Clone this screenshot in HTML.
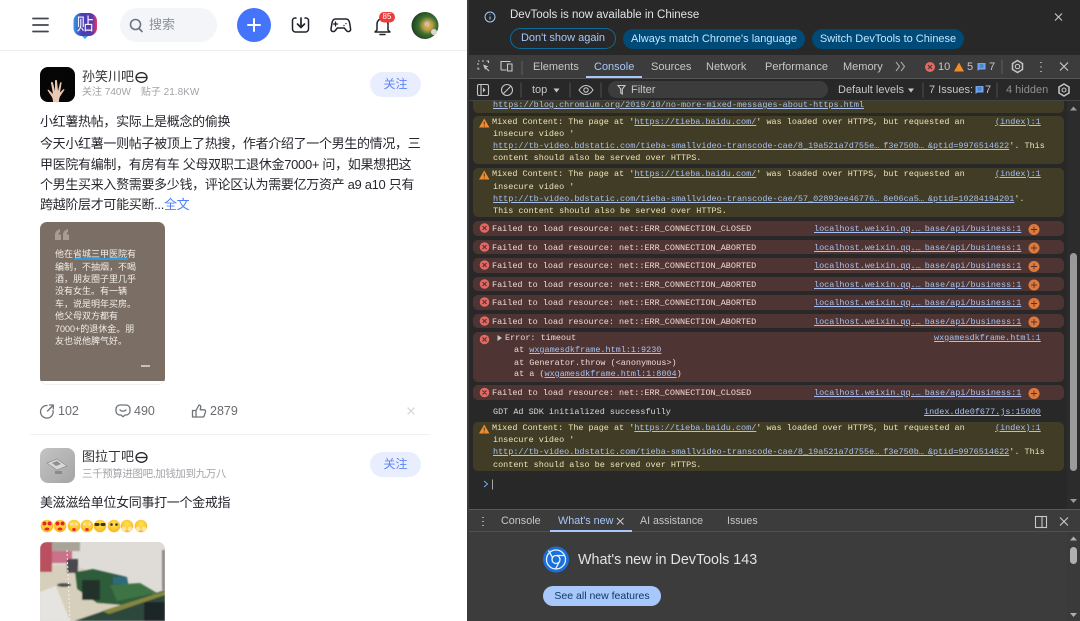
<!DOCTYPE html>
<html lang="zh"><head><meta charset="utf-8"><title>Tieba DevTools</title>
<style>
html,body{margin:0;padding:0;width:1080px;height:621px;overflow:hidden;background:#fff}
body{position:relative;font-family:"Liberation Sans","Noto Sans CJK SC",sans-serif}
.a{position:absolute;white-space:nowrap}
svg{position:absolute;overflow:visible}
#L{position:absolute;left:0;top:0;width:468px;height:621px;background:#fff;overflow:hidden;color:#26262e;filter:blur(.25px)}
#R{position:absolute;left:468px;top:0;width:612px;height:621px;background:#282828;overflow:hidden;filter:blur(.25px)}
#R>*{margin-left:-468px}
.name{font-size:13px;line-height:16px;color:#333;left:82px}
.sub{font-size:10px;line-height:14px;color:#a3a3a8;left:82px}
.fb{left:370px;width:51px;height:25px;border-radius:13px;background:#e9eefe;color:#5f83f6;font-size:12px;line-height:25px;text-align:center}
.t{left:40px;font-size:13px;line-height:18px;letter-spacing:-.32px;color:#26262e}
.act{font-size:12.5px;line-height:16px;color:#6b6b70}
.im{font-size:9px;line-height:12px;color:#f2eeea;left:55px}
.ui{font-size:11px;line-height:14px;color:#c7c7c7}
.blk{position:absolute;left:473px;width:591px;border-radius:5px}
.w{background:#413c26}.r{background:#4e3534}
.c{position:absolute;white-space:nowrap;font-family:"Liberation Mono",monospace;font-size:8.47px;line-height:12px;color:#ede2b8}
.c.e{color:#f2d8d4}.c.n{color:#d8d8d8}
.c a{color:#a8c0ee;text-decoration:underline}
.c i{font-style:normal;letter-spacing:4px}
</style></head><body>
<div id="L">
<!-- nav -->
<div class="a" style="left:120px;top:8px;width:97px;height:34px;border-radius:17px;background:#f3f5f9"></div>
<svg style="left:0;top:0" width="468" height="50">
<path d="M33 18.500h15M33 25h15M33 31.500h15" stroke="#43464e" stroke-width="1.800" stroke-linecap="round"/>
<defs><linearGradient id="lg" x1="0" y1="0" x2="1" y2="0"><stop offset="0" stop-color="#2f9be8"/><stop offset=".35" stop-color="#4a3fb5"/><stop offset=".8" stop-color="#5b3aa8"/><stop offset="1" stop-color="#ea3568"/></linearGradient></defs>
<rect x="73.500" y="13" width="23.500" height="23" rx="8" fill="url(#lg)"/>
<path d="M82 36h6l-3 3z" fill="#36a3ee"/>
<circle cx="135.500" cy="24.500" r="5" fill="none" stroke="#6d7480" stroke-width="1.600"/><path d="M139 28.500l3 3" stroke="#6d7480" stroke-width="1.600" stroke-linecap="round"/>
<circle cx="254" cy="25" r="17" fill="#4474fa"/><path d="M248 25h12M254 19v12" stroke="#fff" stroke-width="2" stroke-linecap="round"/>
<path d="M296 18h-1a2.500 2.500 0 0 0-2.500 2.500v8.500a3 3 0 0 0 3 3h10a3 3 0 0 0 3-3v-8.500a2.500 2.500 0 0 0-2.500-2.500h-1" fill="none" stroke="#20232a" stroke-width="1.500" stroke-linecap="round"/>
<path d="M301 18v9M297.500 24l3.500 3.500 3.500-3.500" fill="none" stroke="#20232a" stroke-width="1.700" stroke-linecap="round" stroke-linejoin="round"/>
<path d="M337 19h10c2.500 0 3.500 2 3.800 5l.8 5c.3 2.500-2.700 3.500-4.300 1.500l-2-2.500h-7l-2 2.500c-1.600 2-4.600 1-4.300-1.500l.8-5c.3-3 1.300-5 3.800-5z" transform="translate(-1)" fill="none" stroke="#20232a" stroke-width="1.500" stroke-linejoin="round"/>
<path d="M335.500 22v4M333.500 24h4M346 23.500v.1M344 25.500v.1" stroke="#20232a" stroke-width="1.300" stroke-linecap="round"/>
<path d="M377 30v-6a5.500 5.500 0 0 1 11 0v6l2 2h-15z" fill="none" stroke="#20232a" stroke-width="1.500" stroke-linejoin="round"/>
<path d="M380 34.500h5" stroke="#20232a" stroke-width="1.500" stroke-linecap="round"/>
<rect x="379" y="12" width="16" height="10.500" rx="5.200" fill="#ee3a3a"/>
<defs><radialGradient id="av" cx=".6" cy=".5" r=".6"><stop offset="0" stop-color="#e8bb55"/><stop offset=".3" stop-color="#b99a45"/><stop offset=".55" stop-color="#3f7030"/><stop offset="1" stop-color="#1c3d1e"/></radialGradient></defs>
<circle cx="425" cy="25.500" r="13.500" fill="url(#av)"/><circle cx="427" cy="24" r="2.500" fill="#c9c2a8"/><circle cx="434" cy="32" r="3" fill="#d8d8d0"/>
</svg>
<div class="a" style="left:76px;top:15px;width:18px;text-align:center;font-size:17px;line-height:19px;color:#f4f0ff">贴</div>
<div class="a" style="left:379px;top:12px;width:16px;text-align:center;font-size:8px;line-height:10px;color:#fff">85</div>
<div class="a" style="left:149px;top:17px;font-size:13px;line-height:16px;color:#8d929c">搜索</div>
<div class="a" style="left:0;top:50px;width:468px;height:1px;background:#eceef0"></div>

<!-- post 1 -->
<div class="a" style="left:40px;top:67px;width:35px;height:35px;border-radius:8px;background:#050505"></div>
<svg style="left:40px;top:67px" width="35" height="35">
<path d="M13 35c0-5-2-6-5-11-1-1 0-2 1-1l4 4-2-11c0-1.500 1.500-1.500 2 0l2 8 0-10c0-1.500 2-1.500 2 0l1 10 2-8c.5-1.500 2-1 1.500.5l-1.500 9 3-3c1-1 2 0 1 1l-4 6c-1 2-1 4-1 6z" fill="#e9c9b4"/>
</svg>
<div class="a name" style="top:69px">孙笑川吧</div>
<svg style="left:135px;top:71px" width="14" height="14"><ellipse cx="6.500" cy="6.500" rx="5.500" ry="4.800" fill="none" stroke="#26262e" stroke-width="1.300"/><path d="M1 6.500h11" stroke="#26262e" stroke-width="1.300"/></svg>
<div class="a sub" style="top:86px">关注 740W<span style="display:inline-block;width:10px"></span>贴子 21.8KW</div>
<div class="a fb" style="top:72px">关注</div>
<div class="a t" style="top:113px">小红薯热帖，实际上是概念的偷换</div>
<div class="a t" style="top:135px">今天小红薯一则帖子被顶上了热搜，作者介绍了一个男生的情况，三</div>
<div class="a t" style="top:156px">甲医院有编制，有房有车 父母双职工退休金7000+ 问，如果想把这</div>
<div class="a t" style="top:176px">个男生买来入赘需要多少钱，评论区认为需要亿万资产 a9 a10 只有</div>
<div class="a t" style="top:196px">跨越阶层才可能买断...<span style="color:#4f80f7">全文</span></div>
<div class="a" style="left:40px;top:222px;width:125px;height:163px;border-radius:7px;background:#fff;box-shadow:0 0 0 1px #f0f0f0 inset;overflow:hidden"><div style="height:159px;background:#7b6e64"></div></div>
<svg style="left:55px;top:229px" width="14" height="11" fill="#a89d94"><path d="M0 11V6c0-3 2-5 5-6v3c-1 .5-1.500 1.500-1.500 2.500H6V11zM8 11V6c0-3 2-5 5-6v3c-1 .5-1.500 1.500-1.500 2.500H14V11z"/></svg>
<div class="a" style="left:74px;top:258px;width:54px;height:2px;background:#2e9bd6"></div>
<div class="a im" style="top:248px">他在省城三甲医院有</div>
<div class="a im" style="top:261px">编制，不抽烟，不喝</div>
<div class="a im" style="top:273px">酒，朋友圈子里几乎</div>
<div class="a im" style="top:285px">没有女生。有一辆</div>
<div class="a im" style="top:298px">车，说是明年买房。</div>
<div class="a im" style="top:310px">他父母双方都有</div>
<div class="a im" style="top:323px">7000+的退休金。朋</div>
<div class="a im" style="top:335px">友也说他脾气好。</div>
<div class="a" style="left:141px;top:365px;width:9px;height:1.500px;background:#c9c2bb"></div>
<svg style="left:0;top:400px" width="468" height="24" fill="none" stroke="#6f7378" stroke-width="1.300" stroke-linecap="round" stroke-linejoin="round">
<path d="M47 5.500a6.300 6.300 0 1 0 6 5M47.500 11l5.500-5.500M49.500 5h3.800v3.800"/>
<path d="M120 5h6a4 4 0 0 1 4 4v2a4 4 0 0 1-4 4h-1l-2 1.700-2-1.700h-1a4 4 0 0 1-4-4V9a4 4 0 0 1 4-4zM120 10c1.500 1.500 4.500 1.500 6 0"/>
<path d="M196 10.500v6.500h-3.500v-6.500zM196 10.500l3-5.500c1.200 0 2 1 1.700 2.300l-.5 2.500h4c1 0 1.600 1 1.300 2l-1.300 4c-.2.700-.8 1.200-1.500 1.200H196"/>
<path d="M408 8l6 6M414 8l-6 6" stroke="#d8d8dc"/>
</svg>
<div class="a act" style="left:58px;top:403px">102</div>
<div class="a act" style="left:134px;top:403px">490</div>
<div class="a act" style="left:210px;top:403px">2879</div>
<div class="a" style="left:30px;top:434px;width:400px;height:1px;background:#eef0f2"></div>

<!-- post 2 -->
<div class="a" style="left:40px;top:448px;width:35px;height:35px;border-radius:8px;background:linear-gradient(135deg,#c4c4c4,#a4a4a4)"></div>
<svg style="left:40px;top:448px" width="35" height="35"><path d="M7 15l10-4 10 7-10 4z" fill="#d8d8d8" stroke="#8d8d8d" stroke-width=".7"/><path d="M12 15l5-2 4 3-5 2z" fill="#8f8f8f"/><rect x="15" y="23" width="7" height="3" fill="#8a8a8a"/></svg>
<div class="a name" style="top:449px">图拉丁吧</div>
<svg style="left:135px;top:451px" width="14" height="14"><ellipse cx="6.500" cy="6.500" rx="5.500" ry="4.800" fill="none" stroke="#26262e" stroke-width="1.300"/><path d="M1 6.500h11" stroke="#26262e" stroke-width="1.300"/></svg>
<div class="a sub" style="top:467px;font-size:10.500px;letter-spacing:-.4px">三千预算进图吧,加钱加到九万八</div>
<div class="a fb" style="top:452px">关注</div>
<div class="a t" style="top:494px">美滋滋给单位女同事打一个金戒指</div>
<svg style="left:40px;top:518px" width="110" height="16">
<defs><radialGradient id="ey" cx=".5" cy=".35" r=".7"><stop offset="0" stop-color="#ffe14f"/><stop offset="1" stop-color="#f8b420"/></radialGradient></defs>
<g fill="url(#ey)"><circle cx="7" cy="8" r="6.300"/><circle cx="20" cy="8" r="6.300"/><circle cx="34" cy="8" r="6.300"/><circle cx="47" cy="8" r="6.300"/><circle cx="60" cy="8" r="6.300"/><circle cx="74" cy="8" r="6.300"/><circle cx="87" cy="8" r="6.300"/><circle cx="101" cy="8" r="6.300"/></g>
<g fill="#e8232a"><circle cx="4.500" cy="5.500" r="2"/><circle cx="9.500" cy="5.500" r="2"/><circle cx="17.500" cy="5.500" r="2"/><circle cx="22.500" cy="5.500" r="2"/><ellipse cx="7" cy="11" rx="2.500" ry="1.500"/><ellipse cx="20" cy="11" rx="2.500" ry="1.500"/><ellipse cx="34" cy="11.500" rx="1.800" ry="1.500"/><ellipse cx="47" cy="11.500" rx="1.800" ry="1.500"/></g>
<g fill="#3a3328"><rect x="54.500" y="5" width="5" height="3" rx="1.200"/><rect x="60.500" y="5" width="5" height="3" rx="1.200"/><circle cx="71.500" cy="6.500" r="1.300"/><circle cx="76.500" cy="6.500" r="1.300"/></g>
<g fill="#fbe3a6"><circle cx="84" cy="11" r="2.500"/><circle cx="90" cy="11" r="2.500"/><circle cx="98" cy="11" r="2.500"/><circle cx="104" cy="11" r="2.500"/><circle cx="31.500" cy="6" r="1.500"/><circle cx="36.500" cy="6" r="1.500"/><circle cx="44.500" cy="6" r="1.500"/><circle cx="49.500" cy="6" r="1.500"/></g>
</svg>
<svg style="left:40px;top:542px" width="126" height="79">
<defs><clipPath id="pc"><path d="M0 79V7a7 7 0 0 1 7-7h111a7 7 0 0 1 7 7v72z"/></clipPath><filter id="bl"><feGaussianBlur stdDeviation=".9"/></filter></defs>
<g clip-path="url(#pc)"><rect width="126" height="79" fill="#dfdcd8"/>
<g filter="url(#bl)">
<path d="M0 24l30-2 30 10 65 40v7H0z" fill="#d6cfbc"/>
<rect x="0" y="0" width="12" height="30" fill="#b9505e"/><rect x="12" y="9" width="20" height="12" fill="#c9728a"/><rect x="12" y="0" width="28" height="9" fill="#a9a49a"/>
<rect x="27" y="17" width="11" height="14" fill="#4a4a4e"/><ellipse cx="24" cy="43" rx="7" ry="2" fill="#4d4d4d"/>
<path d="M35 30l18-3 34 8 2 12 28 6-10 12-50-4-20-14z" fill="#2e5d3b"/>
<rect x="73" y="35" width="14" height="7" fill="#2f6b7e"/>
<path d="M42 38h18v20H42z" fill="#20302a"/><path d="M70 43l30-2 17 10-40 8z" fill="#3c7344"/>
<path d="M34 79l91-31v31z" fill="#2d463c"/><path d="M62 69l63-20v4l-56 19z" fill="#85863f"/><path d="M104 60h21v19h-21z" fill="#1c2826"/>
<path d="M0 50l16-6 14 35H0z" fill="#e6e4e0"/>
<rect x="122" y="8" width="3" height="40" fill="#8f8a85"/>
</g>
<path d="M27 8l3 71" stroke="#efefe9" stroke-width="1" stroke-dasharray="2 2"/></g>
</svg>
</div>

<div class="a" style="left:467px;top:0;width:2px;height:621px;background:#3a3a3a;z-index:5"></div>

<div id="R">
<!-- info bar -->
<div class="a" style="left:468px;top:0;width:612px;height:55px;background:#282828"></div>
<svg style="left:0;top:0" width="1080" height="60" fill="none">
<circle cx="490" cy="17" r="5" stroke="#a8c7fa" stroke-width="1"/><path d="M490 16.500v3M490 14v.8" stroke="#a8c7fa" stroke-width="1"/>
<path d="M1055 13.500l7 7M1062 13.500l-7 7" stroke="#c7c7c7" stroke-width="1.100"/>
</svg>
<div class="a" style="left:510px;top:8px;font-size:11.500px;line-height:15px;color:#e3e3e3">DevTools is now available in Chinese</div>
<div class="a" style="left:510px;top:28px;width:104px;height:19px;border:1px solid #0f6a99;border-radius:11px;text-align:center;font-size:11px;line-height:19px;color:#a8c7fa">Don't show again</div>
<div class="a" style="left:623px;top:29px;width:182px;height:20px;border-radius:10px;background:#004a77;text-align:center;font-size:11px;line-height:20px;color:#c2e7ff">Always match Chrome's language</div>
<div class="a" style="left:812px;top:29px;width:152px;height:20px;border-radius:10px;background:#004a77;text-align:center;font-size:11px;line-height:20px;color:#c2e7ff">Switch DevTools to Chinese</div>

<!-- main toolbar -->
<div class="a" style="left:468px;top:55px;width:612px;height:23px;background:#3c3c3c"></div>
<div class="a" style="left:468px;top:78px;width:612px;height:1px;background:#555"></div>
<div class="a ui" style="left:533px;top:60px">Elements</div>
<div class="a ui" style="left:594px;top:60px;color:#a8c7fa">Console</div>
<div class="a ui" style="left:651px;top:60px">Sources</div>
<div class="a ui" style="left:706px;top:60px">Network</div>
<div class="a ui" style="left:765px;top:60px">Performance</div>
<div class="a ui" style="left:843px;top:60px">Memory</div>
<div class="a" style="left:586px;top:76px;width:56px;height:2px;background:#a8c7fa"></div>
<div class="a ui" style="left:938px;top:60px">10</div>
<div class="a ui" style="left:967px;top:60px">5</div>
<div class="a ui" style="left:989px;top:60px">7</div>
<svg style="left:0;top:55px" width="1080" height="24" fill="none" stroke="#c7c7c7" stroke-width="1.100">
<path d="M478 6h1.500M482 6h2M486.500 6h2v2M478 8v2M478 12.500v1.500h1.500"/><path d="M483 9.500l5.500 2-2.300 1-1 2.500z" fill="#c7c7c7" stroke="none"/><path d="M486 13l3 3"/>
<path d="M501 15v-8.500h9.500M501 15h5.500M507.500 9h4.500v7h-4.500z"/>
<path d="M522 6v14" stroke="#5c5c5c"/>
<path d="M896 7l3.500 4.500-3.500 4.500M901 7l3.500 4.500-3.500 4.500" stroke="#a8a8a8"/>
<circle cx="930" cy="12" r="5" fill="#e46962" stroke="none"/><path d="M928 10l4 4M932 10l-4 4" stroke="#3c3c3c"/>
<path d="M954 16.500h10l-5-9z" fill="#f28b2c" stroke="none"/>
<path d="M977.500 8h8v6.500h-6l-2 1.500z" fill="#6ea4f0" stroke="none"/><path d="M979.500 10h4M979.500 12h4" stroke="#2a4f80" stroke-width=".8"/>
<path d="M1002 5v14" stroke="#5c5c5c"/>
<circle cx="1017.500" cy="11.500" r="2.200"/><path d="M1017.500 5.500l5 3v6l-5 3-5-3v-6z" stroke-width="1.500"/>
<path d="M1041 7v.9M1041 11.500v.9M1041 16v.9" stroke-width="1.700"/>
<path d="M1060 7.500l8 8M1068 7.500l-8 8" stroke-width="1.200"/>
</svg>

<!-- console toolbar -->
<div class="a" style="left:468px;top:79px;width:612px;height:21px;background:#282828"></div>
<div class="a" style="left:608px;top:81px;width:220px;height:17px;border-radius:9px;background:#3c3c3c"></div>
<div class="a ui" style="left:532px;top:83px">top</div>
<div class="a ui" style="left:631px;top:83px">Filter</div>
<div class="a ui" style="left:838px;top:83px">Default levels</div>
<div class="a ui" style="left:929px;top:83px">7 Issues:</div>
<div class="a ui" style="left:985px;top:83px">7</div>
<div class="a ui" style="left:1006px;top:83px;color:#8f8f8f">4 hidden</div>
<svg style="left:0;top:79px" width="1080" height="22" fill="none" stroke="#c7c7c7" stroke-width="1.100">
<rect x="477.500" y="5.500" width="11" height="11" rx="1.500"/><path d="M481 5.500v11"/><path d="M483 8.500l2.500 2.500-2.500 2.500" fill="#c7c7c7" stroke="none"/>
<circle cx="507" cy="11" r="5.500"/><path d="M503 15l8-8"/>
<path d="M521 3.500v15M570 3.500v15M601 3.500v15M923 3.500v15M997 3.500v15" stroke="#4e4e4e"/>
<path d="M553.500 9.500h6l-3 4z" fill="#c7c7c7" stroke="none"/>
<path d="M579 11c2-3 4.500-4.500 7-4.500s5 1.500 7 4.500c-2 3-4.500 4.500-7 4.500s-5-1.500-7-4.500z"/><circle cx="586" cy="11" r="2.200"/>
<path d="M618 6.500h7l-2.700 3.500v5l-1.600-1v-4z"/>
<path d="M908 9.500h6l-3 4z" fill="#c7c7c7" stroke="none"/>
<path d="M975.500 7h8v6.500h-6l-2 1.500z" fill="#6ea4f0" stroke="none"/><path d="M977.500 9h4M977.500 11h4" stroke="#2a4f80" stroke-width=".8"/>
<circle cx="1064" cy="11" r="2"/><path d="M1064 5l5 3v6l-5 3-5-3V8z" stroke-width="1.500"/>
</svg>

<!-- console -->
<div class="blk w" style="top:100px;height:13px;border-radius:0 0 5px 5px"></div>
<div class="a" style="left:468px;top:100px;width:612px;height:1px;background:#444"></div>
<div class="c" style="left:493px;top:99px"><a>https://blog.chromium.org/2019/10/no-more-mixed-messages-about-https.html</a></div>

<div class="blk w" style="top:116px;height:48px"></div>
<div class="c" style="left:492px;top:116px">Mixed Content: The page at '<a>https://tieba.baidu.com/</a>' was loaded over HTTPS, but requested an</div>
<div class="c" style="left:995px;top:116px"><a>(index):1</a></div>
<div class="c" style="left:493px;top:128px">insecure video '</div>
<div class="c" style="left:493px;top:140px"><a>http://tb-video.bdstatic.com/tieba-smallvideo-transcode-cae/8_19a521a7d755e<i>…</i>f3e750b<i>…</i>&amp;ptid=9976514622</a>'. This</div>
<div class="c" style="left:493px;top:152px">content should also be served over HTTPS.</div>

<div class="blk w" style="top:168px;height:49px"></div>
<div class="c" style="left:492px;top:168px">Mixed Content: The page at '<a>https://tieba.baidu.com/</a>' was loaded over HTTPS, but requested an</div>
<div class="c" style="left:995px;top:168px"><a>(index):1</a></div>
<div class="c" style="left:493px;top:181px">insecure video '</div>
<div class="c" style="left:493px;top:193px"><a>http://tb-video.bdstatic.com/tieba-smallvideo-transcode-cae/57_02893ee46776<i>…</i>8e06ca5<i>…</i>&amp;ptid=10284194201</a>'.</div>
<div class="c" style="left:493px;top:205px">This content should also be served over HTTPS.</div>

<div class="blk r" style="top:221px;height:15px"></div>
<div class="blk r" style="top:240px;height:14px"></div>
<div class="blk r" style="top:258px;height:15px"></div>
<div class="blk r" style="top:277px;height:14px"></div>
<div class="blk r" style="top:295px;height:15px"></div>
<div class="blk r" style="top:314px;height:14px"></div>
<div class="blk r" style="top:332px;height:50px"></div>
<div class="blk r" style="top:385px;height:15px"></div>

<div class="c e" style="left:492px;top:223px">Failed to load resource: net::ERR_CONNECTION_CLOSED</div>
<div class="c e" style="left:492px;top:242px">Failed to load resource: net::ERR_CONNECTION_ABORTED</div>
<div class="c e" style="left:492px;top:260px">Failed to load resource: net::ERR_CONNECTION_ABORTED</div>
<div class="c e" style="left:492px;top:279px">Failed to load resource: net::ERR_CONNECTION_ABORTED</div>
<div class="c e" style="left:492px;top:297px">Failed to load resource: net::ERR_CONNECTION_ABORTED</div>
<div class="c e" style="left:492px;top:316px">Failed to load resource: net::ERR_CONNECTION_ABORTED</div>
<div class="c e" style="left:492px;top:387px">Failed to load resource: net::ERR_CONNECTION_CLOSED</div>

<div class="c" style="left:814px;top:223px"><a>localhost.weixin.qq.<i>…</i>base/api/business:1</a></div>
<div class="c" style="left:814px;top:242px"><a>localhost.weixin.qq.<i>…</i>base/api/business:1</a></div>
<div class="c" style="left:814px;top:260px"><a>localhost.weixin.qq.<i>…</i>base/api/business:1</a></div>
<div class="c" style="left:814px;top:279px"><a>localhost.weixin.qq.<i>…</i>base/api/business:1</a></div>
<div class="c" style="left:814px;top:297px"><a>localhost.weixin.qq.<i>…</i>base/api/business:1</a></div>
<div class="c" style="left:814px;top:316px"><a>localhost.weixin.qq.<i>…</i>base/api/business:1</a></div>
<div class="c" style="left:814px;top:387px"><a>localhost.weixin.qq.<i>…</i>base/api/business:1</a></div>

<div class="c e" style="left:505px;top:332px">Error: timeout</div>
<div class="c e" style="left:514px;top:344px">at <a>wxgamesdkframe.html:1:9230</a></div>
<div class="c e" style="left:514px;top:357px">at Generator.throw (&lt;anonymous&gt;)</div>
<div class="c e" style="left:514px;top:368px">at a (<a>wxgamesdkframe.html:1:8004</a>)</div>
<div class="c" style="left:934px;top:332px"><a>wxgamesdkframe.html:1</a></div>

<div class="c n" style="left:493px;top:406px">GDT Ad SDK initialized successfully</div>
<div class="c" style="left:924px;top:406px"><a>index.dde0f677.js:15000</a></div>

<div class="blk w" style="top:422px;height:49px"></div>
<div class="c" style="left:492px;top:422px">Mixed Content: The page at '<a>https://tieba.baidu.com/</a>' was loaded over HTTPS, but requested an</div>
<div class="c" style="left:995px;top:422px"><a>(index):1</a></div>
<div class="c" style="left:493px;top:434px">insecure video '</div>
<div class="c" style="left:493px;top:446px"><a>http://tb-video.bdstatic.com/tieba-smallvideo-transcode-cae/8_19a521a7d755e<i>…</i>f3e750b<i>…</i>&amp;ptid=9976514622</a>'. This</div>
<div class="c" style="left:493px;top:459px">content should also be served over HTTPS.</div>

<svg style="left:0;top:0" width="1080" height="510">
<g fill="#f28b2c"><path d="M479 127.500h10.500l-5.250-9zM479 179.500h10.500l-5.250-9zM479 433.500h10.500l-5.250-9z"/></g>
<g stroke="#3c2f1c" stroke-width=".9"><path d="M484.250 121.500v3M484.250 125.500v1M484.250 173.500v3M484.250 177.500v1M484.250 427.500v3M484.250 431.500v1"/></g>
<g fill="#e46962"><circle cx="484.500" cy="228" r="4.800"/><circle cx="484.500" cy="247" r="4.800"/><circle cx="484.500" cy="265" r="4.800"/><circle cx="484.500" cy="284" r="4.800"/><circle cx="484.500" cy="302" r="4.800"/><circle cx="484.500" cy="321" r="4.800"/><circle cx="484.500" cy="339.500" r="4.800"/><circle cx="484.500" cy="392.500" r="4.800"/></g>
<g stroke="#4e3534" stroke-width="1.100"><path d="M482.500 226l4 4M486.500 226l-4 4M482.500 245l4 4M486.500 245l-4 4M482.500 263l4 4M486.500 263l-4 4M482.500 282l4 4M486.500 282l-4 4M482.500 300l4 4M486.500 300l-4 4M482.500 319l4 4M486.500 319l-4 4M482.500 337.500l4 4M486.500 337.500l-4 4M482.500 390.500l4 4M486.500 390.500l-4 4"/></g>
<path d="M497.500 335l4.500 3-4.500 3z" fill="#c7c7c7"/>
<g fill="#e07a3a"><circle cx="1034" cy="229.500" r="5.500"/><circle cx="1034" cy="248" r="5.500"/><circle cx="1034" cy="266.500" r="5.500"/><circle cx="1034" cy="285" r="5.500"/><circle cx="1034" cy="303.500" r="5.500"/><circle cx="1034" cy="322" r="5.500"/><circle cx="1034" cy="393.500" r="5.500"/></g>
<g stroke="#4e3534" stroke-width=".9" fill="none"><path d="M1031 229.500h6M1034 226.500v6M1031 248h6M1034 245v6M1031 266.500h6M1034 263.500v6M1031 285h6M1034 282v6M1031 303.500h6M1034 300.500v6M1031 322h6M1034 319v6M1031 393.500h6M1034 390.500v6"/></g>
<path d="M484 481l3.500 3-3.500 3" fill="none" stroke="#6ea4f0" stroke-width="1.100"/>
<path d="M492.500 479.500v10" stroke="#c7c7c7" stroke-width=".8"/>
<rect x="1067" y="101" width="13" height="408" fill="#2c2c2c"/>
<rect x="1070" y="253" width="7" height="218" rx="3.500" fill="#9a9a9a"/>
<path d="M1070 110.500h7l-3.500-4zM1070 499h7l-3.500 4z" fill="#9a9a9a"/>
</svg>

<!-- drawer -->
<div class="a" style="left:468px;top:509px;width:612px;height:1px;background:#5a5a5a"></div>
<div class="a" style="left:468px;top:510px;width:612px;height:111px;background:#3c3c3c"></div>
<div class="a" style="left:468px;top:531px;width:612px;height:1px;background:#505050"></div>
<div class="a ui" style="left:501px;top:514px;font-size:10.800px">Console</div>
<div class="a ui" style="left:558px;top:514px;font-size:10.800px;color:#a8c7fa">What's new</div>
<div class="a ui" style="left:640px;top:514px;font-size:10.600px">AI assistance</div>
<div class="a ui" style="left:727px;top:514px;font-size:10.600px">Issues</div>
<div class="a" style="left:550px;top:530px;width:82px;height:2px;background:#a8c7fa"></div>
<svg style="left:0;top:510px" width="1080" height="111" fill="none" stroke="#c7c7c7" stroke-width="1.100">
<path d="M483 7v.9M483 11v.9M483 15v.9" stroke-width="1.700"/>
<path d="M617 8l6.500 6.500M623.500 8l-6.500 6.500"/>
<rect x="1035.500" y="6.500" width="11" height="11"/><path d="M1042 6.500v11"/>
<path d="M1060 7.500l8 8M1068 7.500l-8 8" stroke-width="1.200"/>
<circle cx="556" cy="49.500" r="13" fill="#1a6fd8" stroke="none"/>
<circle cx="556" cy="49.500" r="9.500" stroke="#eaf2ff" stroke-width="1.300"/>
<circle cx="556" cy="49.500" r="4" stroke="#eaf2ff" stroke-width="1.300"/>
<path d="M556 45.500h8.500M552.500 47.500l-4-7M559.500 51.500l-4 7.500" stroke="#eaf2ff" stroke-width="1.300"/>
<rect x="1067" y="22" width="13" height="89" fill="#3a3a3a" stroke="none"/>
<rect x="1070" y="37" width="7" height="17" rx="3.500" fill="#b0b0b0" stroke="none"/>
<path d="M1070 30.500h7l-3.500-4zM1070 103h7l-3.500 4z" fill="#b0b0b0" stroke="none"/>
</svg>
<div class="a" style="left:578px;top:550px;font-size:14.300px;line-height:20px;color:#e3e3e3">What's new in DevTools 143</div>
<div class="a" style="left:543px;top:586px;width:118px;height:20px;border-radius:10px;background:#a8c7fa;text-align:center;font-size:10.500px;line-height:20px;color:#0a3a6a">See all new features</div>
</div>
</body></html>
